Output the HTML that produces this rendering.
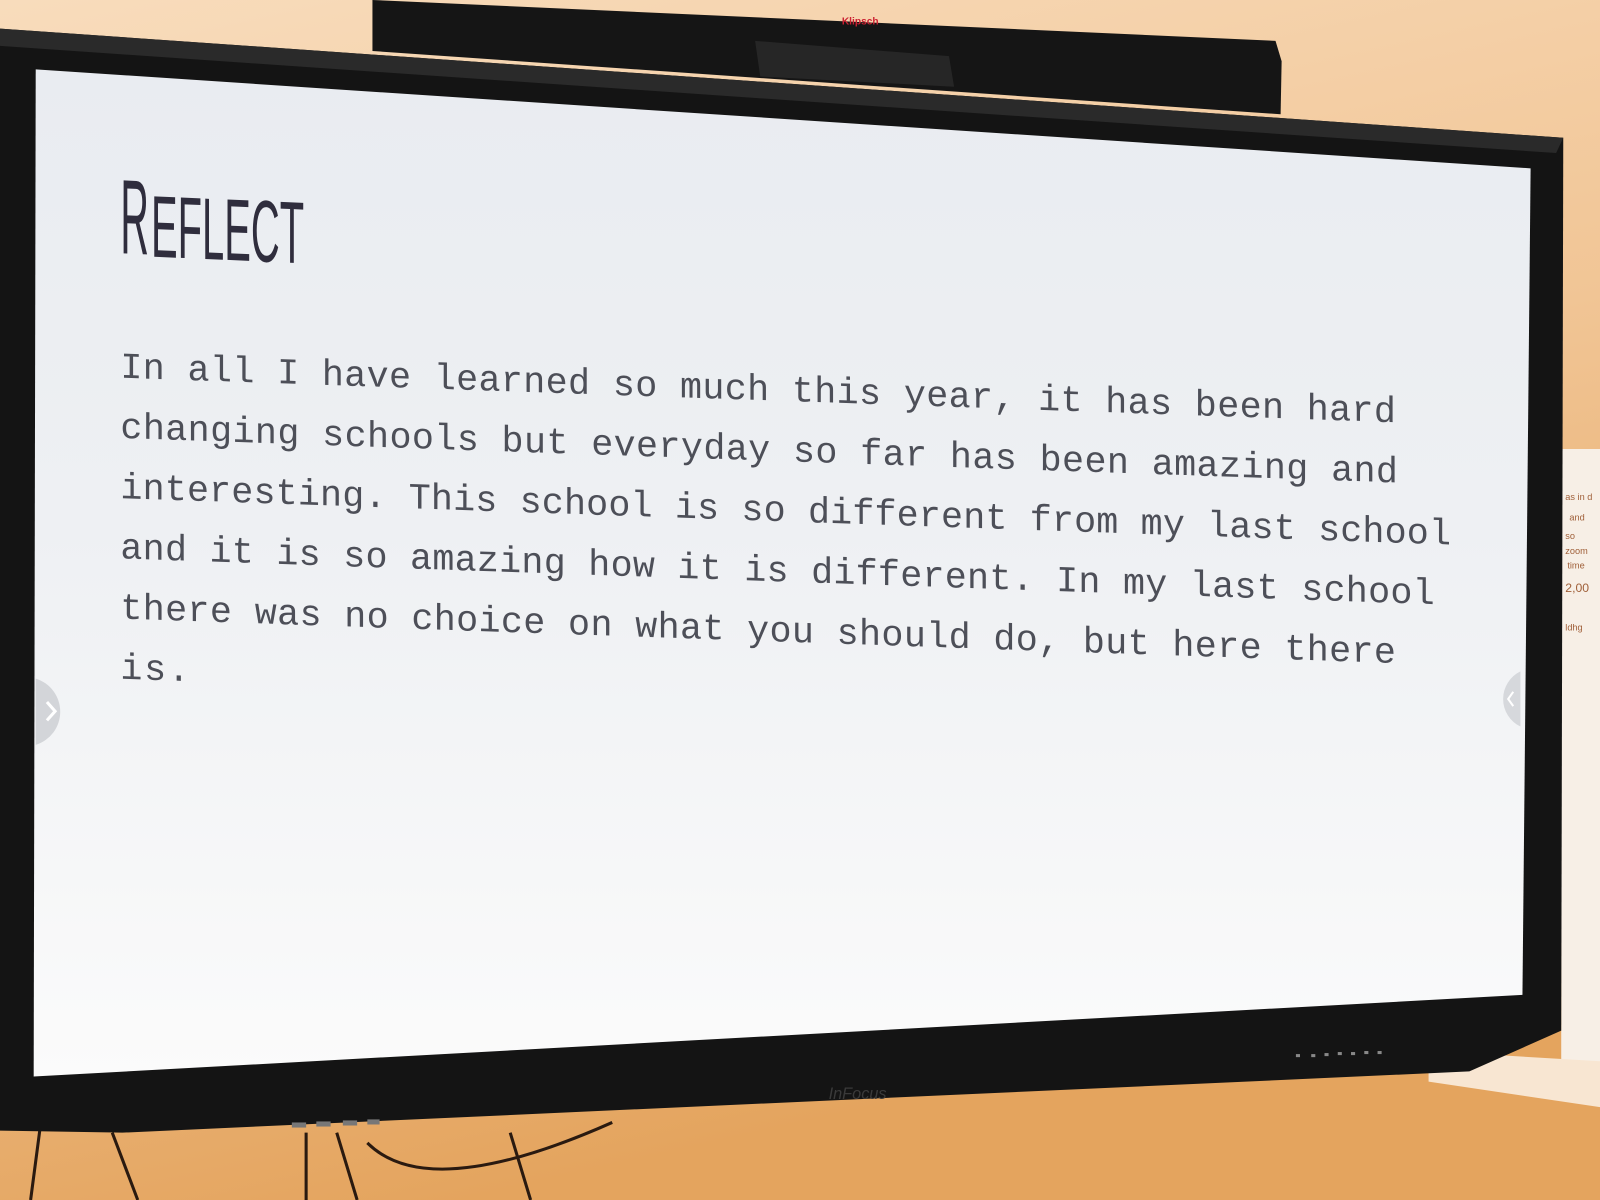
<!DOCTYPE html>
<html><head><meta charset="utf-8"><style>
html,body{margin:0;padding:0;width:1600px;height:1200px;overflow:hidden;background:#e9b27a}
svg{display:block}
</style></head><body>
<svg width="1600" height="1200" viewBox="0 0 1568 1176" preserveAspectRatio="none" xmlns="http://www.w3.org/2000/svg">
<defs>
<linearGradient id="wall" x1="0" y1="0" x2="0.3" y2="1">
<stop offset="0" stop-color="#f8dcbc"/><stop offset="0.5" stop-color="#f1c595"/><stop offset="1" stop-color="#e4a45e"/>
</linearGradient>
<linearGradient id="scr" x1="0" y1="0" x2="0" y2="1">
<stop offset="0" stop-color="#e9ecf1"/><stop offset="0.45" stop-color="#eef0f3"/><stop offset="1" stop-color="#fbfbfb"/>
</linearGradient>
</defs>
<rect width="1568" height="1176" fill="url(#wall)"/>
<polygon points="1530,440 1568,440 1568,1050 1530,1055" fill="#f7efe6"/>
<polygon points="1400,1030 1568,1040 1568,1085 1400,1060" fill="#f8e6d2"/>
<path d="M40,1100 L30,1176 M110,1110 L135,1176 M300,1110 L300,1176 M330,1110 L350,1176 M360,1120 Q420,1180 600,1100 M500,1110 L520,1176" stroke="#2a1a10" stroke-width="3" fill="none"/>
<polygon points="365,0 1250,40 1256,60 1255,112 365,50" fill="#151515"/>
<polygon points="740,40 930,55 935,85 745,75" fill="#262626"/>
<text x="825" y="24" font-family="Liberation Sans,sans-serif" font-size="10" fill="#c23" font-weight="bold">Klipsch</text>
<polygon points="0,28 1532,135 1530,1010 1440,1050 120,1110 0,1108" fill="#141414"/>
<polygon points="0,28 1532,135 1525,150 0,45" fill="#2a2a2a"/>
<polygon points="35,68 1500,165 1492,975 33,1055" fill="url(#scr)"/>
<text x="812" y="1077" font-family="Liberation Sans,sans-serif" font-size="16" font-style="italic" fill="#3a3a3a">InFocus</text>
<g fill="#888"><rect x="1270" y="1033" width="4" height="3"/><rect x="1285" y="1033" width="4" height="3"/><rect x="1298" y="1032" width="4" height="3"/><rect x="1311" y="1031" width="4" height="3"/><rect x="1324" y="1031" width="4" height="3"/><rect x="1337" y="1030" width="4" height="3"/><rect x="1350" y="1030" width="4" height="3"/></g>
<g fill="#777"><rect x="286" y="1100" width="14" height="5"/><rect x="310" y="1099" width="14" height="5"/><rect x="336" y="1098" width="14" height="5"/><rect x="360" y="1097" width="12" height="5"/></g>
<path d="M35,665 A34,34 0 0 1 35,730 L35,665Z" fill="#d3d5d9"/>
<path d="M46,688 L54,697 L46,706" stroke="#fff" stroke-width="3" fill="none"/>
<path d="M1490,658 A30,30 0 0 0 1490,712Z" fill="#d6d8dc"/>
<path d="M1483,678 L1478,685 L1483,692" stroke="#fff" stroke-width="2" fill="none"/>
<g transform="skewY(2.5)">
<text x="0" y="0" transform="translate(118,243) scale(0.5,1)" font-family="Liberation Sans,sans-serif" font-size="104" fill="#2f2d3d" textLength="56" lengthAdjust="spacingAndGlyphs">R</text>
<text x="0" y="0" transform="translate(148,245) scale(0.5,1)" font-family="Liberation Sans,sans-serif" font-size="86" fill="#2f2d3d" textLength="300" lengthAdjust="spacingAndGlyphs">EFLECT</text>
</g>
<g transform="skewY(2.0)" font-family="Liberation Mono,DejaVu Sans Mono,monospace" font-size="36" fill="#4d4f58" lengthAdjust="spacingAndGlyphs">
<text x="118" y="366" textLength="1250">In all I have learned so much this year, it has been hard</text>
<text x="118" y="425" textLength="1252">changing schools but everyday so far has been amazing and</text>
<text x="118" y="484" textLength="1304">interesting. This school is so different from my last school</text>
<text x="118" y="543" textLength="1288">and it is so amazing how it is different. In my last school</text>
<text x="118" y="602" textLength="1250">there was no choice on what you should do, but here there</text>
<text x="118" y="661" textLength="68">is.</text>
</g>
<g font-family="Liberation Sans,sans-serif" font-size="9" fill="#a0603a">
<text x="1534" y="490">as in d</text><text x="1538" y="510">and</text><text x="1534" y="528">so</text><text x="1534" y="543">zoom</text><text x="1536" y="557">time</text><text x="1534" y="580" font-size="12">2,00</text><text x="1534" y="618">ldhg</text>
</g>
</svg>
</body></html>
